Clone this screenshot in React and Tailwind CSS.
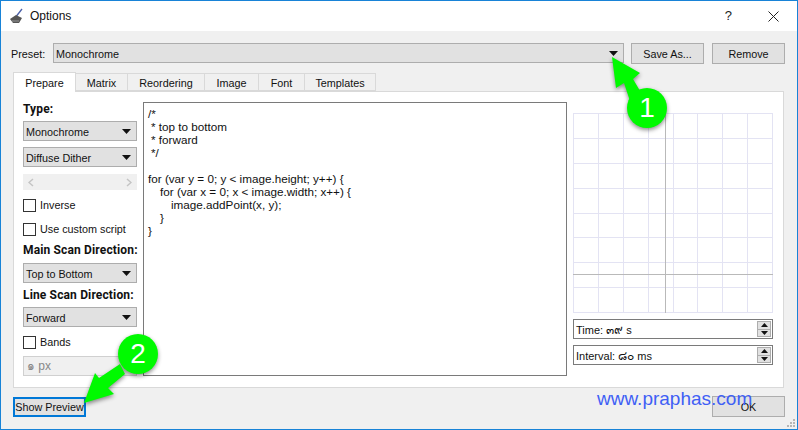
import React from "react";

const Caret = () => (
  <svg width="9" height="5" viewBox="0 0 9 5" className="shrink-0">
    <path d="M0 0h9L4.5 5z" fill="#111" />
  </svg>
);

const Select = ({ label, className = "" }) => (
  <div className={`flex h-[20px] items-center justify-between border border-[#adadad] bg-[#e1e1e1] pl-[2px] pr-[5px] text-[#111] ${className}`}>
    <span className="pt-px">{label}</span>
    <Caret />
  </div>
);

const Check = ({ label }) => (
  <div className="flex h-[14px] items-center gap-[4px]">
    <span className="h-[13px] w-[13px] shrink-0 border border-[#333] bg-white" />
    <span className="whitespace-nowrap text-[#111]">{label}</span>
  </div>
);

const Spin = ({ label, value, unit }) => (
  <div className="flex h-[20px] items-center justify-between border border-[#7a7a7a] bg-white pl-[2px] text-[11px] text-[#111]">
    <span className="pt-px">
      {label} <span className="font-['DejaVu_Sans',sans-serif] text-[12px]">{value}</span> {unit}
    </span>
    <div className="mr-[1px] flex h-[16px] w-[14px] flex-col border border-[#adadad] bg-[#e1e1e1]">
      <div className="flex flex-1 items-center justify-center">
        <svg width="7" height="4" viewBox="0 0 7 4"><path d="M3.5 0L7 4H0z" fill="#111" /></svg>
      </div>
      <div className="h-px bg-[#adadad]" />
      <div className="flex flex-1 items-center justify-center">
        <svg width="7" height="4" viewBox="0 0 7 4"><path d="M0 0h7L3.5 4z" fill="#111" /></svg>
      </div>
    </div>
  </div>
);

const Preview = () => {
  const ticks = [0, 25, 50, 75, 100, 124, 149, 174, 199];
  return (
    <svg width="200" height="200" viewBox="0 0 200 200" className="block">
      {ticks.map((t) => (
        <g key={t} stroke="#e3e3f3" strokeWidth="1">
          <line x1={t + 0.5} y1="0" x2={t + 0.5} y2="200" />
          <line x1="0" y1={t + 0.5} x2="200" y2={t + 0.5} />
        </g>
      ))}
      <line x1="92.5" y1="0" x2="92.5" y2="200" stroke="#b9b9b9" />
      <line x1="0" y1="161.5" x2="200" y2="161.5" stroke="#b9b9b9" />
    </svg>
  );
};

const tabs = [
  { name: "Matrix", w: "w-[53px]" },
  { name: "Reordering", w: "w-[78px]" },
  { name: "Image", w: "w-[55px]" },
  { name: "Font", w: "w-[47px]" },
  { name: "Templates", w: "w-[72px]" },
];

const code = [
  { text: "/*", pad: "pl-0" },
  { text: "* top to bottom", pad: "pl-[3px]" },
  { text: "* forward", pad: "pl-[3px]" },
  { text: "*/", pad: "pl-[3px]" },
  { text: "\u00a0", pad: "pl-0" },
  { text: "for (var y = 0; y < image.height; y++) {", pad: "pl-0" },
  { text: "for (var x = 0; x < image.width; x++) {", pad: "pl-[12px]" },
  { text: "image.addPoint(x, y);", pad: "pl-[23px]" },
  { text: "}", pad: "pl-[12px]" },
  { text: "}", pad: "pl-0" },
];

const Heading = ({ children, className = "" }) => (
  <b className={`whitespace-nowrap font-['Roboto',sans-serif] text-[12px] tracking-[0.15px] text-[#111] ${className}`}>{children}</b>
);

export default function App() {
  return (
    <div className="relative flex h-[430px] w-[798px] flex-col overflow-hidden border border-[#1883d7] bg-[#f0f0f0] font-['Liberation_Sans',sans-serif] text-[10.8px] leading-[16px]">
      {/* title bar */}
      <div className="flex h-[30px] shrink-0 items-center bg-white pl-[9px] pr-[18px]">
        <svg width="14" height="16" viewBox="0 0 14 16" className="mr-[6px]">
          <path d="M12 1L6.500 8" stroke="#4a5fa8" strokeWidth="1.300" />
          <path d="M0 11l6-4 6 3-3 5H3z" fill="#555" />
          <path d="M2 13h7" stroke="#999" />
        </svg>
        <span className="text-[12px] text-[#111]">Options</span>
        <span className="ml-auto mr-[36px] text-[13px] text-[#222]">?</span>
        <svg width="11" height="11" viewBox="0 0 11 11">
          <path d="M0.5 0.5l10 10M10.5 0.5l-10 10" stroke="#222" strokeWidth="1" />
        </svg>
      </div>

      {/* preset row */}
      <div className="mt-[12px] flex items-start pl-[10px] pr-[12px]">
        <span className="mt-[3px] w-[42px] text-[#111]">Preset:</span>
        <div className="flex h-[20px] w-[571px] items-center justify-between border border-[#adadad] bg-[#e1e1e1] pl-[2px] pr-[5px] text-[#111]">
          <span className="pt-px">Monochrome</span>
          <Caret />
        </div>
        <button className="ml-[7px] h-[21px] w-[73px] border border-[#adadad] bg-[#e1e1e1] text-[#111]">Save As...</button>
        <button className="ml-[8px] h-[21px] w-[73px] border border-[#adadad] bg-[#e1e1e1] text-[#111]">Remove</button>
      </div>

      {/* tabs */}
      <div className="mt-[7px] flex h-[20px] items-end pl-[12px]">
        <div className="z-10 -mb-px flex h-[20px] w-[63px] items-center justify-center border border-b-0 border-[#d9d9d9] bg-white text-[#111]">Prepare</div>
        {tabs.map((t) => (
          <div key={t.name} className={`-ml-px flex h-[18px] items-center justify-center border border-[#d9d9d9] bg-[#f0f0f0] pt-px text-[#111] ${t.w}`}>{t.name}</div>
        ))}
      </div>

      {/* tab panel */}
      <div className="ml-[12px] mr-[13px] flex h-[297px] gap-[6px] border border-[#d9d9d9] bg-white pl-[9px] pt-[9px]">
        <div className="flex w-[114px] shrink-0 flex-col">
          <Heading>Type:</Heading>
          <Select label="Monochrome" className="mt-[4px]" />
          <Select label="Diffuse Dither" className="mt-[6px]" />
          <div className="mt-[7px] flex h-[16px] shrink-0 items-center justify-between bg-[#f0f0f0] px-[5px]">
            <svg width="6" height="9" viewBox="0 0 6 9"><path d="M5 1L1 4.500 5 8" stroke="#c4c4c4" strokeWidth="1.500" fill="none" /></svg>
            <svg width="6" height="9" viewBox="0 0 6 9"><path d="M1 1l4 3.500L1 8" stroke="#c4c4c4" strokeWidth="1.500" fill="none" /></svg>
          </div>
          <div className="mt-[8px] flex flex-col gap-[10px]">
            <Check label="Inverse" />
            <Check label="Use custom script" />
          </div>
          <Heading className="mt-[6px]">Main Scan Direction:</Heading>
          <Select label="Top to Bottom" className="mt-[5px]" />
          <Heading className="mt-[4px]">Line Scan Direction:</Heading>
          <Select label="Forward" className="mt-[4px]" />
          <div className="mt-[8px]"><Check label="Bands" /></div>
          <div className="mt-[7px] flex h-[20px] shrink-0 items-center border border-[#d0d0d0] bg-[#f0f0f0] pl-[3px] text-[12px] text-[#888]">๑ px</div>
        </div>

        <div className="mt-px h-[274px] w-[424px] shrink-0 border border-[#7a7a7a] bg-white pl-[4px] pt-[4px] text-[11.7px] leading-[13px] text-[#111]">
          {code.map((line, i) => (
            <div key={i} className={`whitespace-pre ${line.pad}`}>{line.text}</div>
          ))}
        </div>

        <div className="flex w-[200px] shrink-0 flex-col pt-[12px]">
          <Preview />
          <div className="mt-[6px] flex flex-col gap-[6px]">
            <Spin label="Time:" value="๓๙" unit="s" />
            <Spin label="Interval:" value="๘๐" unit="ms" />
          </div>
        </div>
      </div>

      {/* footer */}
      <div className="mt-[8px] flex items-start justify-between px-[12px]">
        <button className="mt-px h-[20px] w-[73px] whitespace-nowrap border-2 border-[#0078d7] bg-[#e1e1e1] text-[#111]">Show Preview</button>
        <button className="h-[21px] w-[73px] border border-[#adadad] bg-[#e1e1e1] text-[#111]">OK</button>
      </div>

      {/* annotations painted over the dialog */}
      <span className="absolute left-[596px] top-[386px] text-[19px] leading-[24px] text-[#3f5ff5]">www.praphas.com</span>

      {/* size grip */}
      <svg width="10" height="10" viewBox="0 0 10 10" className="absolute bottom-[1px] right-[1px]" fill="#b5b5b5">
        <rect x="7" y="1" width="2" height="2" />
        <rect x="4" y="4" width="2" height="2" />
        <rect x="7" y="4" width="2" height="2" />
        <rect x="1" y="7" width="2" height="2" />
        <rect x="4" y="7" width="2" height="2" />
        <rect x="7" y="7" width="2" height="2" />
      </svg>

      {/* callout 1 */}
      <div className="absolute left-[609px] top-[54px] h-[80px] w-[64px]">
        <svg width="64" height="80" viewBox="0 0 64 80" className="absolute left-0 top-0 drop-shadow-[0_2px_2px_rgba(0,0,0,0.45)]">
          <path d="M2 2L30 18 23 24 36 46 22 52 14 28 6 33z" fill="#00fa00" />
          <circle cx="37" cy="53" r="20" fill="#00fa00" />
        </svg>
        <span className="absolute left-[17px] top-[33px] flex h-[40px] w-[40px] items-center justify-center text-[28px] leading-none text-white">1</span>
      </div>

      {/* callout 2 */}
      <div className="absolute left-[80px] top-[330px] h-[76px] w-[80px]">
        <svg width="80" height="76" viewBox="0 0 80 76" className="absolute left-0 top-0 drop-shadow-[0_2px_2px_rgba(0,0,0,0.45)]">
          <path d="M3 72L14 42 18 47 39 33 44 43 27 57 33 63z" fill="#00fa00" />
          <circle cx="57" cy="23" r="20" fill="#00fa00" />
        </svg>
        <span className="absolute left-[37px] top-[3px] flex h-[40px] w-[40px] items-center justify-center text-[28px] leading-none text-white">2</span>
      </div>
    </div>
  );
}
